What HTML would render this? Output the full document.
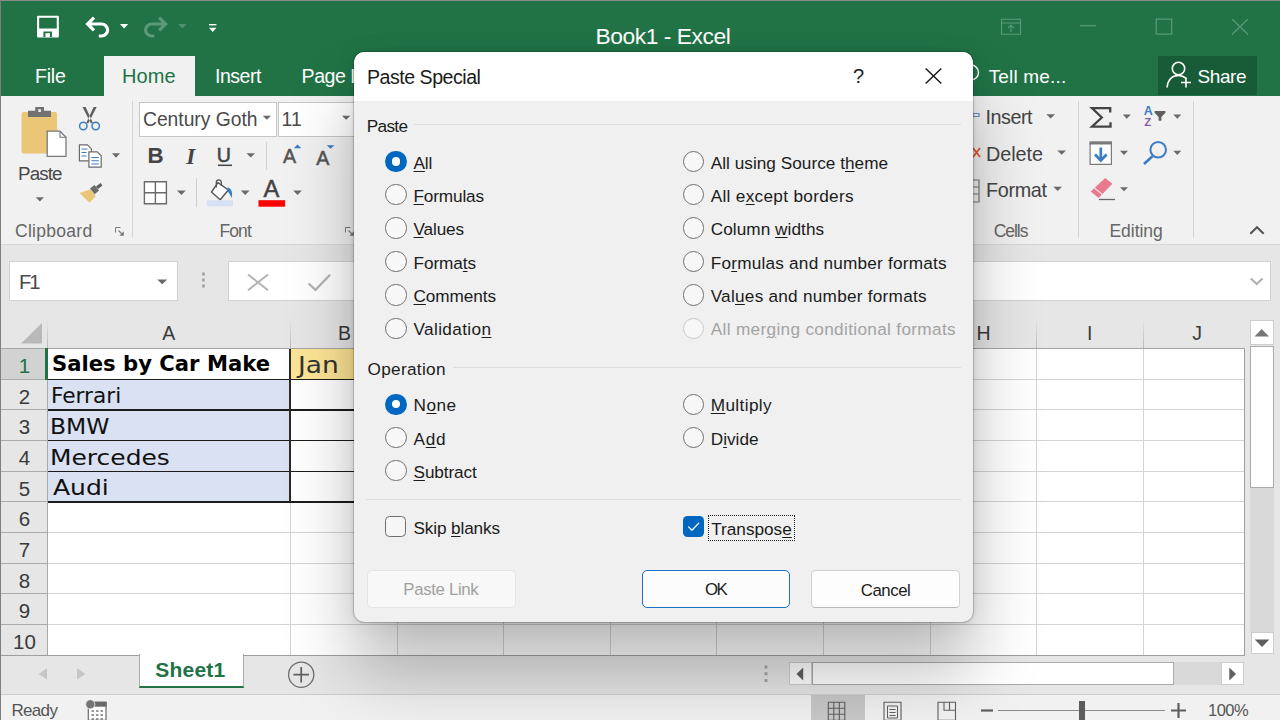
<!DOCTYPE html>
<html lang="en"><head><meta charset="utf-8"><title>Book1 - Excel</title>
<style>

*{box-sizing:border-box;margin:0;padding:0}
html,body{width:1280px;height:720px;overflow:hidden;background:#e6e6e6}
body{font-family:"Liberation Sans",sans-serif;position:relative}
#app{position:absolute;left:0;top:0;width:1280px;height:720px;overflow:hidden;background:#e6e6e6}
.a{position:absolute}
.t{position:absolute;white-space:pre;line-height:1;font-family:"Liberation Sans",sans-serif}
.t.cg{font-family:"DejaVu Sans","Liberation Sans",sans-serif}
.t u{text-decoration:underline;text-decoration-thickness:1px;text-underline-offset:2px}
svg{position:absolute;overflow:visible}
#dlg{position:absolute;left:354.2px;top:52px;width:618.8px;height:569.6px;border-radius:10.5px;background:#f0f0f0;
 box-shadow:0 0 0 1px rgba(0,0,0,.15),0 0 5px rgba(0,0,0,.14),0 50px 68px rgba(0,0,0,.26),0 0 26px rgba(0,0,0,.06);}
#dlg>*{position:absolute}
#dlg .t,#dlg .a,#dlg svg{margin-left:-354.2px;margin-top:-52px}
.hl{position:absolute;height:1px;background:#d4d4d4}
.vl{position:absolute;width:1px;background:#d4d4d4}

</style></head>
<body>
<div id="app">
<div class="a" style="left:0px;top:0px;width:1280.0px;height:96.0px;background:#217346"></div>
<div class="a" style="left:0px;top:96px;width:1280.0px;height:148.3px;background:#f1f1f1"></div>
<div class="a" style="left:0px;top:244.3px;width:1280.0px;height:1.0px;background:#d8d8d8"></div>
<div class="a" style="left:104px;top:56.2px;width:90.6px;height:40.8px;background:#f1f1f1"></div>
<div class="a" style="left:1157.5px;top:56px;width:99.5px;height:38.5px;background:#185c37"></div>
<div class="a" style="left:132.0px;top:101px;width:1.0px;height:137.0px;background:#d5d5d5"></div>
<div class="a" style="left:1077.5px;top:101px;width:1.0px;height:137.0px;background:#d5d5d5"></div>
<div class="a" style="left:1193.2px;top:101px;width:1.0px;height:137.0px;background:#d5d5d5"></div>
<div class="a" style="left:265.5px;top:142px;width:1.0px;height:28.0px;background:#d0d0d0"></div>
<div class="a" style="left:196.3px;top:178.4px;width:1.0px;height:28.9px;background:#d0d0d0"></div>
<div class="a" style="left:139px;top:102.1px;width:138.0px;height:35.1px;background:#fff;border:1px solid #c6c6c6"></div>
<div class="a" style="left:278px;top:102.1px;width:94.0px;height:35.1px;background:#fff;border:1px solid #c6c6c6"></div>
<div class="a" style="left:9.4px;top:261.3px;width:168.9px;height:39.9px;background:#fff;border:1.2px solid #d2d2d2"></div>
<div class="a" style="left:228px;top:261.3px;width:1042.8px;height:39.9px;background:#fff;border:1.2px solid #d2d2d2"></div>
<div class="a" style="left:47.5px;top:348.59px;width:1197.1px;height:306.6px;background:#fff"></div>
<div class="a" style="left:290px;top:348.59px;width:107.0px;height:30.7px;background:#fde596"></div>
<div class="a" style="left:48px;top:379.25399999999996px;width:242.0px;height:122.7px;background:#d9e1f2"></div>
<div class="a" style="left:1px;top:348.59px;width:46.4px;height:30.7px;background:#d2d2d2"></div>
<div class="hl" style="left:48px;top:378.75px;width:1196.6px"></div>
<div class="hl" style="left:1px;top:378.75px;width:47px;background:#ababab"></div>
<div class="hl" style="left:48px;top:409.42px;width:1196.6px"></div>
<div class="hl" style="left:1px;top:409.42px;width:47px;background:#ababab"></div>
<div class="hl" style="left:48px;top:440.08px;width:1196.6px"></div>
<div class="hl" style="left:1px;top:440.08px;width:47px;background:#ababab"></div>
<div class="hl" style="left:48px;top:470.75px;width:1196.6px"></div>
<div class="hl" style="left:1px;top:470.75px;width:47px;background:#ababab"></div>
<div class="hl" style="left:48px;top:501.41px;width:1196.6px"></div>
<div class="hl" style="left:1px;top:501.41px;width:47px;background:#ababab"></div>
<div class="hl" style="left:48px;top:532.07px;width:1196.6px"></div>
<div class="hl" style="left:1px;top:532.07px;width:47px;background:#ababab"></div>
<div class="hl" style="left:48px;top:562.74px;width:1196.6px"></div>
<div class="hl" style="left:1px;top:562.74px;width:47px;background:#ababab"></div>
<div class="hl" style="left:48px;top:593.40px;width:1196.6px"></div>
<div class="hl" style="left:1px;top:593.40px;width:47px;background:#ababab"></div>
<div class="hl" style="left:48px;top:624.07px;width:1196.6px"></div>
<div class="hl" style="left:1px;top:624.07px;width:47px;background:#ababab"></div>
<div class="hl" style="left:48px;top:654.73px;width:1196.6px"></div>
<div class="hl" style="left:1px;top:654.73px;width:47px;background:#ababab"></div>
<div class="vl" style="left:289.5px;top:348.59px;height:306.6px"></div>
<div class="vl" style="left:396.5px;top:348.59px;height:306.6px"></div>
<div class="vl" style="left:503.0px;top:348.59px;height:306.6px"></div>
<div class="vl" style="left:609.5px;top:348.59px;height:306.6px"></div>
<div class="vl" style="left:716.3px;top:348.59px;height:306.6px"></div>
<div class="vl" style="left:823.0px;top:348.59px;height:306.6px"></div>
<div class="vl" style="left:929.5px;top:348.59px;height:306.6px"></div>
<div class="vl" style="left:1036.1px;top:348.59px;height:306.6px"></div>
<div class="vl" style="left:1142.9px;top:348.59px;height:306.6px"></div>
<div class="vl" style="left:47.0px;top:318px;height:30.5px;background:linear-gradient(#e6e6e6,#b8b8b8)"></div>
<div class="vl" style="left:289.5px;top:318px;height:30.5px;background:linear-gradient(#e6e6e6,#b8b8b8)"></div>
<div class="vl" style="left:396.5px;top:318px;height:30.5px;background:linear-gradient(#e6e6e6,#b8b8b8)"></div>
<div class="vl" style="left:503.0px;top:318px;height:30.5px;background:linear-gradient(#e6e6e6,#b8b8b8)"></div>
<div class="vl" style="left:609.5px;top:318px;height:30.5px;background:linear-gradient(#e6e6e6,#b8b8b8)"></div>
<div class="vl" style="left:716.3px;top:318px;height:30.5px;background:linear-gradient(#e6e6e6,#b8b8b8)"></div>
<div class="vl" style="left:823.0px;top:318px;height:30.5px;background:linear-gradient(#e6e6e6,#b8b8b8)"></div>
<div class="vl" style="left:929.5px;top:318px;height:30.5px;background:linear-gradient(#e6e6e6,#b8b8b8)"></div>
<div class="vl" style="left:1036.1px;top:318px;height:30.5px;background:linear-gradient(#e6e6e6,#b8b8b8)"></div>
<div class="vl" style="left:1142.9px;top:318px;height:30.5px;background:linear-gradient(#e6e6e6,#b8b8b8)"></div>
<div class="a" style="left:1px;top:347.98999999999995px;width:1243.6px;height:1.1px;background:#a6a6a6"></div>
<div class="a" style="left:47px;top:348.59px;width:1.0px;height:306.6px;background:#a8a8a8"></div>
<div class="a" style="left:1244.0px;top:348.59px;width:1.2px;height:306.6px;background:#9e9e9e"></div>
<div class="a" style="left:1px;top:654.63px;width:1244.1px;height:1.2px;background:#9e9e9e"></div>
<div class="a" style="left:45px;top:348.09px;width:3.0px;height:31.7px;background:#217346"></div>
<div class="a" style="left:48px;top:378.57399999999996px;width:882.0px;height:1.4px;background:#1c1c1c"></div>
<div class="a" style="left:48px;top:409.238px;width:882.0px;height:1.4px;background:#1c1c1c"></div>
<div class="a" style="left:48px;top:439.902px;width:882.0px;height:1.4px;background:#1c1c1c"></div>
<div class="a" style="left:48px;top:470.566px;width:882.0px;height:1.4px;background:#1c1c1c"></div>
<div class="a" style="left:48px;top:501.22999999999996px;width:882.0px;height:1.4px;background:#1c1c1c"></div>
<div class="a" style="left:289.2px;top:348.59px;width:1.6px;height:153.3px;background:#2e2a2a"></div>
<svg style="left:21.4px;top:323px" width="21" height="21" viewBox="0 0 21 21"><path d="M21 0V20.6H0Z" fill="#b9b9b9"/></svg>
<div class="a" style="left:0px;top:655.83px;width:1280.0px;height:38.2px;background:#e6e6e6"></div>
<div class="a" style="left:139px;top:654px;width:104.8px;height:34.3px;background:#fff;border-left:1px solid #ababab;border-right:1px solid #ababab;border-bottom:2.4px solid #217346"></div>
<div class="a" style="left:0px;top:693.6px;width:1280.0px;height:1.0px;background:#cfcfcf"></div>
<div class="a" style="left:0px;top:694.6px;width:1280.0px;height:25.4px;background:#f1f1f1"></div>
<div class="a" style="left:811px;top:694.6px;width:54.3px;height:25.4px;background:#c8c8c8"></div>
<div class="a" style="left:788.5px;top:662.4px;width:23.2px;height:22.8px;background:#fff;border:1px solid #cdcdcd"></div>
<div class="a" style="left:812px;top:662.4px;width:409.0px;height:22.8px;background:#d9d9d9"></div>
<div class="a" style="left:812px;top:662.4px;width:361.9px;height:23.0px;background:#fff;border:1px solid #ababab"></div>
<div class="a" style="left:1221px;top:662.4px;width:23.0px;height:22.8px;background:#fff;border:1px solid #cdcdcd"></div>
<div class="a" style="left:1249.5px;top:320px;width:24.5px;height:24.8px;background:#fff;border:1px solid #cdcdcd"></div>
<div class="a" style="left:1249.7px;top:346px;width:24.7px;height:285.6px;background:#d9d9d9"></div>
<div class="a" style="left:1249.7px;top:346.3px;width:24.7px;height:141.5px;background:#fff;border:1px solid #ababab"></div>
<div class="a" style="left:1250.5px;top:631.6px;width:23.2px;height:22.9px;background:#fff;border:1px solid #cdcdcd"></div>
<div class="a" style="left:998px;top:710px;width:167.0px;height:1.0px;background:#8a8a8a"></div>
<div class="a" style="left:1078.8px;top:701px;width:6.2px;height:19.0px;background:#5c5c5c"></div>
<div class="a" style="left:0px;top:0px;width:1280.0px;height:1.2px;background:#8b8b8b"></div>
<div class="a" style="left:0px;top:0px;width:1.3px;height:720.0px;background:#7f7f7f"></div>
<span class="t" style="left:148.7px;width:40px;text-align:center;top:323.9px;font-size:19.5px;color:#3a3a3a">A</span>
<span class="t" style="left:324.5px;width:40px;text-align:center;top:323.9px;font-size:19.5px;color:#3a3a3a">B</span>
<span class="t" style="left:963.5px;width:40px;text-align:center;top:323.9px;font-size:19.5px;color:#3a3a3a">H</span>
<span class="t" style="left:1069.7px;width:40px;text-align:center;top:323.9px;font-size:19.5px;color:#3a3a3a">I</span>
<span class="t" style="left:1177px;width:40px;text-align:center;top:323.9px;font-size:19.5px;color:#3a3a3a">J</span>
<span class="t" style="left:4px;width:41px;text-align:center;top:356.0px;font-size:20.5px;color:#217346">1</span>
<span class="t" style="left:4px;width:41px;text-align:center;top:386.7px;font-size:20.5px;color:#3a3a3a">2</span>
<span class="t" style="left:4px;width:41px;text-align:center;top:417.4px;font-size:20.5px;color:#3a3a3a">3</span>
<span class="t" style="left:4px;width:41px;text-align:center;top:448.0px;font-size:20.5px;color:#3a3a3a">4</span>
<span class="t" style="left:4px;width:41px;text-align:center;top:478.7px;font-size:20.5px;color:#3a3a3a">5</span>
<span class="t" style="left:4px;width:41px;text-align:center;top:509.4px;font-size:20.5px;color:#3a3a3a">6</span>
<span class="t" style="left:4px;width:41px;text-align:center;top:540.0px;font-size:20.5px;color:#3a3a3a">7</span>
<span class="t" style="left:4px;width:41px;text-align:center;top:570.7px;font-size:20.5px;color:#3a3a3a">8</span>
<span class="t" style="left:4px;width:41px;text-align:center;top:601.4px;font-size:20.5px;color:#3a3a3a">9</span>
<span class="t" style="left:4px;width:41px;text-align:center;top:632.0px;font-size:20.5px;color:#3a3a3a">10</span>
<span class="t" style="left:595.6px;top:25.2px;font-size:22.8px;color:#fff;letter-spacing:-0.46px;">Book1 - Excel</span>
<span class="t" style="left:35.0px;top:66.7px;font-size:19.5px;color:#fff;letter-spacing:-0.19px;">File</span>
<span class="t" style="left:121.9px;top:66.0px;font-size:20px;color:#217346;letter-spacing:0.16px;">Home</span>
<span class="t" style="left:215.0px;top:66.7px;font-size:19.5px;color:#fff;letter-spacing:-0.47px;">Insert</span>
<span class="t" style="left:301.6px;top:66.6px;font-size:19.6px;color:#fff;letter-spacing:-0.50px;">Page L</span>
<span class="t" style="left:988.7px;top:66.9px;font-size:19px;color:#fff;letter-spacing:0.17px;">Tell me...</span>
<span class="t" style="left:1197.5px;top:66.9px;font-size:19px;color:#fff;letter-spacing:-0.41px;">Share</span>
<span class="t" style="left:18.0px;top:165.1px;font-size:18.8px;color:#484848;letter-spacing:-0.90px;">Paste</span>
<span class="t" style="left:15.0px;top:222.6px;font-size:17.5px;color:#666;letter-spacing:0.29px;">Clipboard</span>
<span class="t" style="left:143.0px;top:110.0px;font-size:19.3px;color:#4a4a4a;letter-spacing:-0.02px;">Century Goth</span>
<span class="t" style="left:281.4px;top:110.0px;font-size:19.3px;color:#4a4a4a;letter-spacing:0.31px;">11</span>
<span class="t" style="left:219.4px;top:222.6px;font-size:17.5px;color:#666;letter-spacing:-0.85px;">Font</span>
<span class="t" style="left:985.5px;top:108.4px;font-size:19.8px;color:#444;letter-spacing:-0.50px;">Insert</span>
<span class="t" style="left:986.0px;top:144.8px;font-size:19.8px;color:#444;letter-spacing:-0.04px;">Delete</span>
<span class="t" style="left:986.0px;top:180.5px;font-size:19.8px;color:#444;letter-spacing:-0.33px;">Format</span>
<span class="t" style="left:993.7px;top:222.6px;font-size:17.5px;color:#666;letter-spacing:-1.04px;">Cells</span>
<span class="t" style="left:1109.5px;top:222.6px;font-size:17.5px;color:#666;letter-spacing:-0.05px;">Editing</span>
<span class="t" style="left:19.0px;top:272.4px;font-size:20.3px;color:#4a4a4a;letter-spacing:-2.19px;">F1</span>
<span class="t" style="left:155.3px;top:658.8px;font-size:21px;color:#217346;letter-spacing:0.22px;font-weight:700;">Sheet1</span>
<span class="t" style="left:11.5px;top:701.6px;font-size:17px;color:#555;letter-spacing:-0.69px;">Ready</span>
<span class="t" style="left:1208.0px;top:702.0px;font-size:16.5px;color:#555;letter-spacing:-0.51px;">100%</span>
<span class="t" style="left:147.6px;top:144.9px;font-size:22.3px;color:#444;font-weight:700;">B</span>
<span class="t" style="left:186.3px;top:144.5px;font-size:23px;color:#444;font-weight:700;font-style:italic;font-family:'Liberation Serif',serif;">I</span>
<span class="t" style="left:216.8px;top:145.7px;font-size:19.6px;color:#444;-webkit-text-stroke:0.55px #444;">U</span>
<span class="t" style="left:283.0px;top:147.4px;font-size:19.6px;color:#555;-webkit-text-stroke:0.5px #555;">A</span>
<span class="t" style="left:316.3px;top:148.6px;font-size:19.6px;color:#555;-webkit-text-stroke:0.5px #555;">A</span>
<span class="t" style="left:263.5px;top:178.1px;font-size:23.7px;color:#444;-webkit-text-stroke:0.5px #444;">A</span>
<span class="t" style="left:1143.8px;top:105.1px;font-size:12.5px;color:#3b7dc4;font-weight:700;">A</span>
<span class="t" style="left:1144.2px;top:116.7px;font-size:11.5px;color:#8b5aa6;font-weight:700;">Z</span>
<span class="t cg" style="left:51.6px;top:354.4px;font-size:21px;color:#000;font-weight:700;transform:scaleX(1.007);transform-origin:0 0;">Sales by Car Make</span>
<span class="t cg" style="left:50.7px;top:385.3px;font-size:21.6px;color:#111;transform:scaleX(1.003);transform-origin:0 0;">Ferrari</span>
<span class="t cg" style="left:50.3px;top:416.1px;font-size:21.6px;color:#111;transform:scaleX(1.085);transform-origin:0 0;">BMW</span>
<span class="t cg" style="left:50.2px;top:446.5px;font-size:21.6px;color:#111;transform:scaleX(1.155);transform-origin:0 0;">Mercedes</span>
<span class="t cg" style="left:52.5px;top:477.1px;font-size:21.6px;color:#111;transform:scaleX(1.159);transform-origin:0 0;">Audi</span>
<span class="t cg" style="left:298.3px;top:353.6px;font-size:23.4px;color:#333;transform:scaleX(1.132);transform-origin:0 0;">Jan</span>
<svg style="left:0;top:0" width="1280" height="720" viewBox="0 0 1280 720">
<path d="M38.1 16.7h19.7v19.8H38.1z" fill="none" stroke="#fff" stroke-width="2.1" stroke-linejoin="round"/>
<path d="M38.1 28.5h19.7v8H38.1z" fill="#fff"/>
<path d="M43.4 31.5h8.5v5.6h-8.5z" fill="#217346"/><path d="M45.4 33.2h4.6v4h-4.6z" fill="#fff"/>
<path d="M94 17.6L87.6 24L94 30.4M88 24H101.600A6 6 0 0 1 101.600 36H98.800" fill="none" stroke="#fff" stroke-width="3.2" stroke-linejoin="miter"/>
<path d="M120.0 24.0H128.2L124.1 28.4Z" fill="#fff"/>
<path d="M159.200 17.600L165.600 24L159.200 30.400M165.200 24H151.600A6 6 0 0 0 151.600 36H154.400" fill="none" stroke="#5a9a79" stroke-width="3.2"/>
<path d="M178.2 24.0H186.6L182.4 28.4Z" fill="#4f9070"/>
<path d="M209 24h7.4v1.4H209z" fill="#fff"/>
<path d="M209.0 27.8H216.4L212.7 32.0Z" fill="#fff"/>
<path d="M1001.5 19.2h19v15h-19zM1001.5 23h19" fill="none" stroke="#5b9a79" stroke-width="1.1"/>
<path d="M1011 32V25.5M1008 28.2l3-3 3 3" fill="none" stroke="#5b9a79" stroke-width="1.1"/>
<path d="M1080 25.7h16" stroke="#5b9a79" stroke-width="1.2"/>
<path d="M1156.2 19.2h15.5v15h-15.5z" fill="none" stroke="#5b9a79" stroke-width="1.2"/>
<path d="M1232 19l16 15.5M1248 19l-16 15.5" stroke="#5b9a79" stroke-width="1.2"/>
<circle cx="1178.5" cy="68.5" r="6.2" fill="none" stroke="#fff" stroke-width="1.6"/>
<path d="M1167 87.5c1-8 5.5-12 11.500-12c3 0 5.500 1 7.500 3" fill="none" stroke="#fff" stroke-width="1.6"/>
<path d="M1186 77.500v10M1181 82.500h10" stroke="#fff" stroke-width="1.6"/>
<circle cx="971" cy="72.5" r="7.5" fill="none" stroke="#fff" stroke-width="1.4"/>
<rect x="21.5" y="112" width="35.6" height="41.5" rx="2" fill="#eac676"/>
<path d="M28 110.7h23v6.4h-23zM35.200 107h8.800v4h-8.800z" fill="#727272"/><rect x="38.300" y="109.200" width="2.600" height="2.800" fill="#f1f1f1"/>
<path d="M47.200 131.200h12.800l6 6v19.200h-18.800z" fill="#fff" stroke="#7a7a7a" stroke-width="1.3"/><path d="M60 131.200v6h6" fill="none" stroke="#7a7a7a" stroke-width="1.100"/>
<path d="M35.7 197.2H44.0L39.9 201.6Z" fill="#6a6a6a"/>
<path d="M82.500 107L85.600 107L92.800 122.800L91 123.600ZM96.700 107L93.600 107L86.400 122.800L88.200 123.600Z" fill="#5f5f5f"/>
<circle cx="83.300" cy="126" r="3.700" fill="none" stroke="#3b7dc4" stroke-width="1.500"/><circle cx="95.700" cy="126" r="3.700" fill="none" stroke="#3b7dc4" stroke-width="1.500"/>
<path d="M79.400 144.900h8l4 4v12h-12z" fill="#fff" stroke="#6b6b6b" stroke-width="1.200"/><path d="M81.500 149h6M81.500 152.500h5M81.500 156h5" stroke="#3b7dc4" stroke-width="1.100"/>
<path d="M88.900 151.800h8.300l4 4v11.300h-12.300z" fill="#fff" stroke="#6b6b6b" stroke-width="1.200"/><path d="M91.300 157.500h7.500M91.300 160.800h7.500M91.300 164h7.500" stroke="#3b7dc4" stroke-width="1.100"/>
<path d="M112.0 153.3H120.0L116.0 157.7Z" fill="#6a6a6a"/>
<path d="M79.600 193L90.300 189.200L95.800 196.300L89.500 202.700Z" fill="#eac676"/>
<path d="M90 188.500l4.500-3.500 4.500 5.500-4.300 3.800z" fill="#6b6b6b"/><path d="M96 186.500l4.500-3.500 2 2.500-4.500 3.600z" fill="#5f5f5f"/>
<path d="M115.5 232.5V227.5H120.5" fill="none" stroke="#7a7a7a" stroke-width="1"/><path d="M118.5 230.5L123.0 235.0" fill="none" stroke="#7a7a7a" stroke-width="1.1"/><path d="M123.8 231.3V235.8H119.3Z" fill="#7a7a7a"/>
<path d="M345.5 232.5V227.5H350.5" fill="none" stroke="#7a7a7a" stroke-width="1"/><path d="M348.5 230.5L353.0 235.0" fill="none" stroke="#7a7a7a" stroke-width="1.1"/><path d="M353.8 231.3V235.8H349.3Z" fill="#7a7a7a"/>
<path d="M262.7 115.8H271.0L266.9 119.8Z" fill="#6a6a6a"/>
<path d="M342.0 115.8H350.3L346.1 119.8Z" fill="#6a6a6a"/>
<path d="M246.5 153.2H255.0L250.8 157.4Z" fill="#6a6a6a"/>
<path d="M218 165.300h14" stroke="#444" stroke-width="1.500"/>
<path d="M293.700 148.200L297.500 144.500L301.300 148.200Z" fill="#3b7dc4"/>
<path d="M326.700 145.200H334.400L330.550 148.800Z" fill="#3b7dc4"/>
<path d="M144.400 181.700h22v22h-22zM155.400 181.700v22M144.400 192.700h22" fill="#fff" stroke="#6a6a6a" stroke-width="1.400"/>
<path d="M177.0 190.5H185.8L181.4 194.9Z" fill="#6a6a6a"/>
<path d="M218 182.600L228.300 190L220.200 199.800L211.500 192Z" fill="#fff" stroke="#555" stroke-width="1.400" stroke-linejoin="round"/>
<path d="M216.300 187.500V182.300a2.500 2.500 0 0 1 5 0V186" fill="none" stroke="#555" stroke-width="1.300"/>
<path d="M227.500 187.500c3.500 0.500 5.500 4 4.300 10.500c-1.500-3.500-3-5.500-5-7.500z" fill="#3b7dc4"/>
<rect x="206.800" y="200.300" width="26.200" height="6" fill="#d6e0f4"/>
<path d="M240.8 190.5H249.6L245.2 194.9Z" fill="#6a6a6a"/>
<rect x="258.500" y="200.200" width="26.600" height="6.500" fill="#ff0000"/>
<path d="M293.2 190.5H301.8L297.5 194.9Z" fill="#6a6a6a"/>
<path d="M973 113.500h6v3h-6z" fill="none" stroke="#6b8fbf" stroke-width="1.200"/>
<path d="M973 148l7 9M980 148l-7 9" stroke="#e0582c" stroke-width="1.800"/>
<path d="M972 180h7v22h-7M972 187h7M972 194h7" fill="none" stroke="#7a7a7a" stroke-width="1.200"/>
<path d="M1046.3 114.3H1055.0L1050.7 118.5Z" fill="#6a6a6a"/>
<path d="M1057.3 150.5H1066.0L1061.7 154.7Z" fill="#6a6a6a"/>
<path d="M1053.3 186.8H1062.0L1057.7 191.0Z" fill="#6a6a6a"/>
<path d="M1110.200 112.500V108.200H1092L1101.800 117.500L1092 126.600H1110.500V122.300" fill="none" stroke="#444" stroke-width="2.300" stroke-linejoin="miter"/>
<path d="M1122.8 114.5H1130.8L1126.8 118.7Z" fill="#6a6a6a"/>
<path d="M1154.600 111h10.800v1.800l-4 4.200v3.800h-2.800v-3.800l-4-4.200z" fill="#5f5f5f"/>
<path d="M1173.3 114.5H1181.3L1177.3 118.7Z" fill="#6a6a6a"/>
<path d="M1090.100 143h21.300v21.400h-21.300z" fill="#fff" stroke="#7a7a7a" stroke-width="1.200"/><path d="M1089.500 141.300h22.500v3.200h-22.500z" fill="#7a7a7a"/>
<path d="M1100.800 147.500v12.500M1095 154.500l5.800 6 5.800-6" fill="none" stroke="#3b7dc4" stroke-width="2.700"/>
<path d="M1120.0 150.8H1128.0L1124.0 154.9Z" fill="#6a6a6a"/>
<circle cx="1158.200" cy="149.800" r="7.800" fill="none" stroke="#3b7dc4" stroke-width="2"/><path d="M1152.500 156.200L1144 164" stroke="#3b7dc4" stroke-width="2.600"/>
<path d="M1173.3 150.8H1181.3L1177.3 154.9Z" fill="#6a6a6a"/>
<path d="M1105.200 178L1112.400 183.800L1098.600 197.900L1090.700 191.400Z" fill="#e8798e"/><path d="M1094.200 187.800L1102 194.300" stroke="#f6dfe3" stroke-width="1.200"/>
<path d="M1099 199.500h16" stroke="#666" stroke-width="1.300"/>
<path d="M1120.0 187.2H1128.0L1124.0 191.3Z" fill="#6a6a6a"/>
<path d="M1250.300 233.800L1257 227.200L1263.700 233.800" fill="none" stroke="#555" stroke-width="2"/>
<path d="M157.2 279.6H167.2L162.2 284.2Z" fill="#6a6a6a"/>
<path d="M203.500 272.500v3M203.500 278.500v3M203.500 284.500v3" stroke="#9a9a9a" stroke-width="2.400"/>
<path d="M248 274.500L268 290.300M268 274.500L248 290.300" stroke="#b3b3b3" stroke-width="2"/>
<path d="M308.500 283.500L315.500 289.800L330 274.800" fill="none" stroke="#b3b3b3" stroke-width="2.300"/>
<path d="M1250.800 278.500L1256.700 284L1262.600 278.500" fill="none" stroke="#b0b0b0" stroke-width="2.200"/>
<path d="M1254.500 336.500H1269L1261.750 329Z" fill="#777"/>
<path d="M1254.800 639.500H1269.300L1262.050 647Z" fill="#5f5f5f"/>
<path d="M803.200 667.500V680.500L796.500 674Z" fill="#5f5f5f"/>
<path d="M1229.300 667.500V680.500L1236 674Z" fill="#5f5f5f"/>
<path d="M766 665.500v3M766 672.200v3M766 678.900v3" stroke="#a6a6a6" stroke-width="3"/>
<path d="M47 668.200V679.600L38.500 673.900Z" fill="#c6c6c6"/><path d="M77 668.200V679.600L85.500 673.900Z" fill="#c6c6c6"/>
<circle cx="301.200" cy="674.700" r="12.600" fill="none" stroke="#6f6f6f" stroke-width="1.300"/><path d="M293.500 674.700h15.500M301.200 667v15.500" stroke="#5f5f5f" stroke-width="1.700"/>
<path d="M88.300 702.300h17.700v18h-17.700z" fill="#fff" stroke="#6a6a6a" stroke-width="1.200"/><path d="M88.300 701.700h18.300v5h-18.300z" fill="#6a6a6a"/><circle cx="90.300" cy="704.300" r="4.600" fill="#757575" stroke="#f1f1f1" stroke-width="0.800"/><path d="M91.500 711h2.500M96 711h2.500M100.500 711h2.500M91.500 715h2.500M96 715h2.500M100.500 715h2.500M91.500 719h2.500M96 719h2.500M100.500 719h2.500" stroke="#777" stroke-width="1.500"/>
<path d="M828.300 702.200h16.500v18h-16.500zM833.800 702.200v18M839.300 702.200v18M828.300 708.200h16.500M828.300 714.200h16.500" fill="none" stroke="#5f5f5f" stroke-width="1.100"/>
<path d="M884 702.200h17v18h-17z" fill="none" stroke="#5f5f5f" stroke-width="1.100"/><path d="M887.500 706h10v12h-10zM889.500 709.500h6M889.500 712.500h6M889.500 715.500h6" fill="none" stroke="#5f5f5f" stroke-width="1"/>
<path d="M938 702.200h17.500v18h-17.500zM944 702.200v8h11.500M949.500 702.200v8" fill="none" stroke="#5f5f5f" stroke-width="1.100"/>
<path d="M981 710.500h12" stroke="#5f5f5f" stroke-width="2.200"/><path d="M1171 710.500h15M1178.500 703v15" stroke="#5f5f5f" stroke-width="2.200"/>
</svg>
</div>
<div id="dlg">
<div style="left:0;top:0;width:618.8px;height:49.3px;background:#fff;border-radius:10.5px 10.5px 0 0"></div>
<div class="a" style="left:414px;top:124px;width:547.0px;height:1.0px;background:#dcdcdc"></div>
<div class="a" style="left:452.5px;top:367px;width:508.5px;height:1.0px;background:#dcdcdc"></div>
<div class="a" style="left:366px;top:499px;width:595.0px;height:1.0px;background:#dcdcdc"></div>
<div class="a" style="left:385.4px;top:150.8px;width:21.2px;height:21.2px;border-radius:50%;background:#0067c0"><div style="position:absolute;left:6.4px;top:6.4px;width:8.4px;height:8.4px;border-radius:50%;background:#fff"></div></div>
<div class="a" style="left:682.6px;top:150.8px;width:21.2px;height:21.2px;border-radius:50%;border:1.4px solid #707070;background:#f7f7f7"></div>
<div class="a" style="left:385.4px;top:184.20000000000002px;width:21.2px;height:21.2px;border-radius:50%;border:1.4px solid #707070;background:#f7f7f7"></div>
<div class="a" style="left:682.6px;top:184.20000000000002px;width:21.2px;height:21.2px;border-radius:50%;border:1.4px solid #707070;background:#f7f7f7"></div>
<div class="a" style="left:385.4px;top:217.4px;width:21.2px;height:21.2px;border-radius:50%;border:1.4px solid #707070;background:#f7f7f7"></div>
<div class="a" style="left:682.6px;top:217.4px;width:21.2px;height:21.2px;border-radius:50%;border:1.4px solid #707070;background:#f7f7f7"></div>
<div class="a" style="left:385.4px;top:250.9px;width:21.2px;height:21.2px;border-radius:50%;border:1.4px solid #707070;background:#f7f7f7"></div>
<div class="a" style="left:682.6px;top:250.9px;width:21.2px;height:21.2px;border-radius:50%;border:1.4px solid #707070;background:#f7f7f7"></div>
<div class="a" style="left:385.4px;top:284.4px;width:21.2px;height:21.2px;border-radius:50%;border:1.4px solid #707070;background:#f7f7f7"></div>
<div class="a" style="left:682.6px;top:284.4px;width:21.2px;height:21.2px;border-radius:50%;border:1.4px solid #707070;background:#f7f7f7"></div>
<div class="a" style="left:385.4px;top:317.59999999999997px;width:21.2px;height:21.2px;border-radius:50%;border:1.4px solid #707070;background:#f7f7f7"></div>
<div class="a" style="left:682.6px;top:317.59999999999997px;width:21.2px;height:21.2px;border-radius:50%;border:1.4px solid #c8c8c8;background:#f7f7f7"></div>
<div class="a" style="left:385.4px;top:393.5px;width:21.2px;height:21.2px;border-radius:50%;background:#0067c0"><div style="position:absolute;left:6.4px;top:6.4px;width:8.4px;height:8.4px;border-radius:50%;background:#fff"></div></div>
<div class="a" style="left:682.6px;top:393.5px;width:21.2px;height:21.2px;border-radius:50%;border:1.4px solid #707070;background:#f7f7f7"></div>
<div class="a" style="left:385.4px;top:426.79999999999995px;width:21.2px;height:21.2px;border-radius:50%;border:1.4px solid #707070;background:#f7f7f7"></div>
<div class="a" style="left:682.6px;top:426.79999999999995px;width:21.2px;height:21.2px;border-radius:50%;border:1.4px solid #707070;background:#f7f7f7"></div>
<div class="a" style="left:385.4px;top:460.09999999999997px;width:21.2px;height:21.2px;border-radius:50%;border:1.4px solid #707070;background:#f7f7f7"></div>
<div class="a" style="left:385.1px;top:516.1px;width:21.3px;height:20.9px;border:1.35px solid #6e6e6e;border-radius:4.5px;background:#f6f6f6"></div>
<div class="a" style="left:682.5px;top:516.3px;width:21.2px;height:21.2px;border-radius:4.5px;background:#0067c0"></div>
<svg style="left:682.5px;top:516.3px" width="21.2" height="21.2" viewBox="0 0 21.2 21.2"><path d="M5.6 10.9l3.3 3.3 6.8-7" fill="none" stroke="#fff" stroke-width="1.25" stroke-linecap="round" stroke-linejoin="round"/></svg>
<div class="a" style="left:708px;top:515px;width:87.0px;height:26.0px;border:1px dotted #222"></div>
<div class="a" style="left:367px;top:569.8px;width:148.8px;height:37.8px;background:#f8f8f8;border:1px solid #e4e4e4;border-radius:4.5px"></div>
<div class="a" style="left:641.5px;top:569.6px;width:148.5px;height:38.1px;background:#fcfcfc;border:1.6px solid #1a73c7;border-radius:5px"></div>
<div class="a" style="left:811.2px;top:569.6px;width:148.4px;height:38.1px;background:#fdfdfd;border:1px solid #d2d2d2;border-bottom-color:#b9b9b9;border-radius:4.5px"></div>
<span class="t" style="left:853px;top:66.3px;font-size:20px;color:#1b1b1b">?</span>
<svg style="left:925px;top:68px" width="17" height="16" viewBox="0 0 17 16"><path d="M0.7 0.5L16.3 15.5M16.3 0.5L0.7 15.5" stroke="#1b1b1b" stroke-width="1.5" fill="none"/></svg>
<span class="t" style="left:367.0px;top:67.7px;font-size:19.6px;color:#1b1b1b;letter-spacing:-0.49px;">Paste Special</span>
<span class="t" style="left:366.7px;top:117.7px;font-size:17.2px;color:#1b1b1b;letter-spacing:-0.65px;">Paste</span>
<span class="t" style="left:367.5px;top:360.6px;font-size:17.2px;color:#1b1b1b;letter-spacing:0.32px;">Operation</span>
<span class="t" style="left:413.5px;top:154.6px;font-size:17.2px;color:#1b1b1b;letter-spacing:-0.14px;"><u>A</u>ll</span>
<span class="t" style="left:413.5px;top:188.0px;font-size:17.2px;color:#1b1b1b;letter-spacing:-0.15px;"><u>F</u>ormulas</span>
<span class="t" style="left:413.5px;top:221.2px;font-size:17.2px;color:#1b1b1b;letter-spacing:-0.14px;"><u>V</u>alues</span>
<span class="t" style="left:413.5px;top:254.7px;font-size:17.2px;color:#1b1b1b;letter-spacing:-0.07px;">Forma<u>t</u>s</span>
<span class="t" style="left:413.5px;top:288.2px;font-size:17.2px;color:#1b1b1b;letter-spacing:-0.07px;"><u>C</u>omments</span>
<span class="t" style="left:413.5px;top:321.4px;font-size:17.2px;color:#1b1b1b;letter-spacing:0.37px;">Validatio<u>n</u></span>
<span class="t" style="left:710.7px;top:154.6px;font-size:17.2px;color:#1b1b1b;letter-spacing:0.03px;">All using Source t<u>h</u>eme</span>
<span class="t" style="left:710.7px;top:188.0px;font-size:17.2px;color:#1b1b1b;letter-spacing:0.31px;">All e<u>x</u>cept borders</span>
<span class="t" style="left:710.7px;top:221.2px;font-size:17.2px;color:#1b1b1b;letter-spacing:0.06px;">Column <u>w</u>idths</span>
<span class="t" style="left:710.7px;top:254.7px;font-size:17.2px;color:#1b1b1b;letter-spacing:0.22px;">Fo<u>r</u>mulas and number formats</span>
<span class="t" style="left:710.7px;top:288.2px;font-size:17.2px;color:#1b1b1b;letter-spacing:0.25px;">Val<u>u</u>es and number formats</span>
<span class="t" style="left:710.7px;top:321.4px;font-size:17.2px;color:#a3a3a3;letter-spacing:0.33px;">All mer<u>g</u>ing conditional formats</span>
<span class="t" style="left:413.5px;top:397.3px;font-size:17.2px;color:#1b1b1b;letter-spacing:0.49px;">N<u>o</u>ne</span>
<span class="t" style="left:413.5px;top:430.6px;font-size:17.2px;color:#1b1b1b;letter-spacing:0.74px;">A<u>d</u>d</span>
<span class="t" style="left:413.5px;top:463.9px;font-size:17.2px;color:#1b1b1b;letter-spacing:-0.10px;"><u>S</u>ubtract</span>
<span class="t" style="left:710.7px;top:397.3px;font-size:17.2px;color:#1b1b1b;letter-spacing:0.38px;"><u>M</u>ultiply</span>
<span class="t" style="left:710.7px;top:430.6px;font-size:17.2px;color:#1b1b1b;letter-spacing:0.02px;">D<u>i</u>vide</span>
<span class="t" style="left:413.5px;top:520.3px;font-size:17.2px;color:#1b1b1b;letter-spacing:-0.13px;">Skip <u>b</u>lanks</span>
<span class="t" style="left:711.2px;top:520.5px;font-size:17.2px;color:#1b1b1b;">Transpos<u>e</u></span>
<span class="t" style="left:403.3px;top:582.4px;font-size:16.8px;color:#a0a0a0;letter-spacing:-0.33px;">Paste Link</span>
<span class="t" style="left:705.0px;top:582.4px;font-size:16.8px;color:#1b1b1b;letter-spacing:-1.55px;">OK</span>
<span class="t" style="left:860.8px;top:582.5px;font-size:16.8px;color:#1b1b1b;letter-spacing:-0.45px;">Cancel</span>
</div>
</body></html>
